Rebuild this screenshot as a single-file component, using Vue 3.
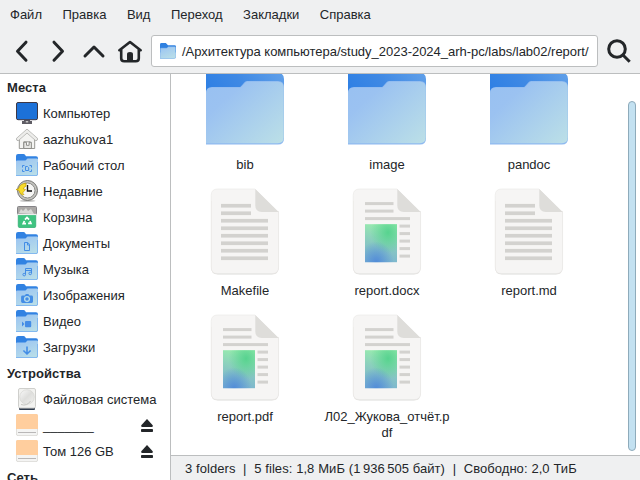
<script setup>
const menus = ['Файл', 'Правка', 'Вид', 'Переход', 'Закладки', 'Справка']
const groups = [
  {
    title: 'Места',
    items: [
      { icon: 'computer', label: 'Компьютер' },
      { icon: 'home', label: 'aazhukova1' },
      { icon: 'desktop', label: 'Рабочий стол' },
      { icon: 'recent', label: 'Недавние' },
      { icon: 'trash', label: 'Корзина' },
      { icon: 'documents', label: 'Документы' },
      { icon: 'music', label: 'Музыка' },
      { icon: 'pictures', label: 'Изображения' },
      { icon: 'video', label: 'Видео' },
      { icon: 'downloads', label: 'Загрузки' },
    ],
  },
  {
    title: 'Устройства',
    items: [
      { icon: 'disk', label: 'Файловая система' },
      { icon: 'volume', label: '_______', eject: true },
      { icon: 'volume', label: 'Том 126 GB', eject: true },
    ],
  },
  { title: 'Сеть', items: [] },
]
const folderIcons = ['desktop', 'documents', 'music', 'pictures', 'video', 'downloads']
const files = [
  { type: 'folder', name: 'bib' },
  { type: 'folder', name: 'image' },
  { type: 'folder', name: 'pandoc' },
  { type: 'text', name: 'Makefile' },
  { type: 'doc', name: 'report.docx' },
  { type: 'text', name: 'report.md' },
  { type: 'doc', name: 'report.pdf' },
  { type: 'doc', name: 'Л02_Жукова_отчёт.pdf' },
]
</script>

<template>
  <div class="window">
    <svg class="defs" width="0" height="0">
      <defs>
        <linearGradient id="back" x1="0" y1="0.6" x2="1" y2="0.3">
          <stop offset="0" stop-color="#2f80e4" />
          <stop offset="0.45" stop-color="#3f89e4" />
          <stop offset="1" stop-color="#5f9fe9" />
        </linearGradient>
        <linearGradient id="front" gradientUnits="userSpaceOnUse" x1="20" y1="26" x2="80" y2="90">
          <stop offset="0" stop-color="#99c1f1" />
          <stop offset="0.2" stop-color="#9bc2f1" />
          <stop offset="1" stop-color="#bbdfe7" />
        </linearGradient>
        <linearGradient id="mini" x1="0.2" y1="0" x2="0.7" y2="1">
          <stop offset="0" stop-color="#9cc5f2" />
          <stop offset="1" stop-color="#b9dee8" />
        </linearGradient>
        <linearGradient id="preview" x1="0.35" y1="1" x2="0.5" y2="0">
          <stop offset="0" stop-color="#7cb4d0" />
          <stop offset="0.45" stop-color="#88c8c2" />
          <stop offset="1" stop-color="#98ebae" />
        </linearGradient>
        <radialGradient id="glow" cx="0.72" cy="0.22" r="0.55">
          <stop offset="0" stop-color="#57d38f" />
          <stop offset="1" stop-color="#57d38f" stop-opacity="0" />
        </radialGradient>
        <radialGradient id="deep" cx="0.35" cy="1" r="0.55">
          <stop offset="0" stop-color="#528cd8" />
          <stop offset="1" stop-color="#528cd8" stop-opacity="0" />
        </radialGradient>
        <linearGradient id="metal" x1="0" y1="0" x2="1" y2="1">
          <stop offset="0" stop-color="#fafafa" />
          <stop offset="0.5" stop-color="#dededc" />
          <stop offset="1" stop-color="#f1f1ef" />
        </linearGradient>
      </defs>
    </svg>

    <nav class="menubar">
      <span v-for="m in menus" :key="m">{{ m }}</span>
    </nav>

    <header class="toolbar">
      <svg class="tool" viewBox="0 0 24 24"><path d="M16 3.200 7.500 12.200l8.500 9" /></svg>
      <svg class="tool" viewBox="0 0 24 24"><path d="M8 3.200 16.500 12.200l-8.500 9" /></svg>
      <svg class="tool" viewBox="0 0 24 24"><path d="M3 17 12 8 21 17" /></svg>
      <svg class="tool" viewBox="0 0 24 24">
        <path class="house" d="M1.400 11.200 12 3 22.600 11.200M3.200 10v9.200q0 3 3 3h11.600q3 0 3-3V10" />
        <path class="solid" d="M9 22.500v-7.300q0-2.200 3-2.200t3 2.200v7.300z" />
      </svg>
      <div class="path">
        <svg class="path-icon" viewBox="0 0 22 22">
          <path fill="#2f80e0" d="M0 2q0-2 2-2h6l3 3h9q2 0 2 2v8H0z" />
          <path fill="url(#mini)" stroke="#66a5e8" stroke-width=".7" d="M.3 21.500V8q0-1 1-1h8l2-2h9q1.300 0 1.300 1.300v13q0 2-2 2z" />
        </svg>
        <span class="path-text">/Архитектура компьютера/study_2023-2024_arh-pc/labs/lab02/report/</span>
      </div>
      <svg class="search" viewBox="0 0 26 26">
        <circle cx="11" cy="11" r="8.300" />
        <path d="m17.200 17.200 6.500 6.500" />
      </svg>
    </header>

    <div class="body">
      <aside class="sidebar">
        <section v-for="g in groups" :key="g.title">
          <h2>{{ g.title }}</h2>
          <div v-for="(it, i) in g.items" :key="i" class="place">
            <svg class="place-icon" viewBox="0 0 22 22">
              <template v-if="folderIcons.includes(it.icon)">
                <path fill="#3182e2" d="M0 2q0-2 2-2h5.500q1 0 1.500.8L10 2.300h10q2 0 2 2V12H0z" />
                <path fill="url(#mini)" d="M0 22V7.500q0-1 1-1h8.500l2-2H21q1 0 1 1V20q0 2-2 2z" />
                <path fill="none" stroke="#6faaf0" stroke-width=".8" d="M0 21.600h20q1.600 0 1.600-1.600V8" />
              </template>
              <g v-if="it.icon === 'desktop'" class="mark">
                <path d="M8.500 11.500H6.500v2M6.500 15.500v2h2M13.500 11.500h2v2M15.500 15.500v2h-2M9.500 12.500h2l1.200 1.200v2.800H9.500z" />
              </g>
              <g v-else-if="it.icon === 'documents'" class="mark">
                <path d="M8.500 10.500h3.300l1.700 1.900v6.100H8.500zM11.500 11v2h2" />
              </g>
              <g v-else-if="it.icon === 'music'" class="mark">
                <path d="M9.500 16.500v-6h6V15M9.500 12.500h6" />
                <circle cx="8.200" cy="16.600" r="1.300" /><circle cx="14.200" cy="15.400" r="1.300" />
              </g>
              <g v-else-if="it.icon === 'pictures'">
                <path fill="#438de6" d="M6.500 11.500h2.300L9.900 10h2.400l1.100 1.500h2.200q1.400 0 1.400 1.400v4.700q0 1.400-1.400 1.400H6.500q-1.400 0-1.400-1.400v-4.700q0-1.400 1.400-1.400z" />
                <circle cx="11" cy="15.100" r="2.400" fill="#438de6" stroke="#b5dbec" stroke-width="1.300" />
              </g>
              <g v-else-if="it.icon === 'video'" fill="#438de6">
                <rect x="9" y="11" width="6.200" height="6.200" rx="1" />
                <path d="M6 11.500 8.500 14 6 16.500z" />
              </g>
              <g v-else-if="it.icon === 'downloads'" class="mark bold">
                <path d="M11 10.500v7.300M7.400 14.500 11 18l3.600-3.500" />
              </g>
              <g v-else-if="it.icon === 'computer'">
                <path fill="#5e5c64" d="M8 18h6v1h2v3H6v-3h2z" />
                <path fill="#deddda" d="M9.800 19.200h2.400v1.200H9.800z" />
                <rect x=".5" y=".5" width="21" height="17.200" rx="1.500" fill="#1c71d8" stroke="#3d3846" />
              </g>
              <g v-else-if="it.icon === 'home'">
                <path fill="#f4f4f2" stroke="#8d8d89" stroke-width=".9" d="M3.300 11v9.500h4.500v-6.700h6.400v6.700h4.500V11L11 4z" />
                <path fill="#e7e7e4" stroke="#858580" stroke-width=".9" d="M7.800 20.500v-6.200h2.700v3h2.600v-3h2.300v6.200z" />
                <path fill="none" stroke="#a2a29e" stroke-width="3.600" stroke-linejoin="round" stroke-linecap="round" d="M2 11 11 3l9 8" />
                <path fill="none" stroke="#ededeb" stroke-width="2.400" stroke-linejoin="round" stroke-linecap="round" d="M2 11 11 3l9 8" />
              </g>
              <g v-else-if="it.icon === 'recent'">
                <ellipse cx="11.500" cy="20.800" rx="8" ry="1.200" fill="#ccc" />
                <circle cx="11.500" cy="10.500" r="10" fill="#c4c4c0" stroke="#73736f" />
                <circle cx="11.500" cy="10.500" r="7.500" fill="#f6f6f4" stroke="#888884" />
                <path fill="none" stroke="#111" stroke-width="1.400" d="M11.500 5v6h4.500" />
                <path fill="#f7dc2c" stroke="#c4a000" stroke-width=".7" d="M0 9.500 2.500 8.800Q4 3.500 10 3.200v3Q7.500 7 7.300 9l2.200.5L6.500 13l1.500 1.500-1.500.3Q3.500 14 3 10.500z" />
              </g>
              <g v-else-if="it.icon === 'trash'">
                <path fill="#3fc380" stroke="#26a269" stroke-width=".6" d="M2.200 8h17.600v12q0 1.700-1.700 1.700H3.900q-1.700 0-1.700-1.700z" />
                <rect x="1.500" y=".5" width="19" height="8" rx="1" fill="#aaa8a6" stroke="#858387" />
                <path fill="#d9d8d6" d="m3 7 2-4 2 2 3-3 2 3 3-2 3 5z" />
                <path fill="none" stroke="#eee" stroke-width="1.200" d="M1.500 8.500h19" />
                <path class="recycle" d="m9 13.600 2-2.200 2 2.200M14 15l.9 2.300h-2.800M10 17.700H7.200L8.400 15" />
              </g>
              <g v-else-if="it.icon === 'disk'">
                <path fill="#2e3a4c" d="M3 18.500h16v2.500q0 1-1 1H4q-1 0-1-1z" />
                <rect x="2.500" y=".5" width="17" height="19.500" rx="1.500" fill="#f2f2f0" stroke="#cfcfcc" />
                <circle cx="11" cy="9" r="7.300" fill="url(#metal)" stroke="#d2d2cf" stroke-width=".6" />
                <path fill="none" stroke="#c5c5c1" stroke-width="1" d="M5 16.500q6 2 9.500-3.500" />
              </g>
              <g v-else-if="it.icon === 'volume'">
                <rect x=".4" y=".4" width="21.200" height="21.200" rx="1.600" fill="#f4f4f3" stroke="#d6d4d1" stroke-width=".8" />
                <path fill="#ffce9e" d="M0 15V1.500Q0 0 1.500 0h19Q22 0 22 1.500V15z" />
                <path stroke="#b9b7b7" stroke-width="1" d="M2 18.500h18" />
              </g>
            </svg>
            <span class="place-label">{{ it.label }}</span>
            <svg v-if="it.eject" class="eject" viewBox="0 0 12 13">
              <path d="M6 0 .3 6.200Q-.2 7.900 1.200 8h9.600q1.400-.1.900-1.800z" />
              <rect y="10" width="12" height="3" rx=".8" />
            </svg>
          </div>
        </section>
      </aside>

      <main class="main">
        <div class="view">
          <div class="grid">
            <div v-for="f in files" :key="f.name" class="file">
              <svg class="file-icon" viewBox="0 0 96 96">
                <template v-if="f.type === 'folder'">
                  <path fill="url(#back)" d="M9 10h30l6 6h36q6 0 6 6v20H9z" />
                  <path fill="#8fbaf0" d="M9 87.400V36q0-6 6-6h27.200q1 0 1.600-.6l3.800-4.200q1.100-1.200 3-1.200H81q6 0 6 6v51.400q0 6-6 6z" />
                  <path fill="url(#front)" d="M9 86.300V36.500q0-5.700 6-5.700h27.500q1.200 0 2-.8l3.600-4q1-1.200 2.700-1.200H81q5.700 0 5.700 6v49.800q0 5.700-6 5.700z" />
                </template>
                <template v-else>
                  <path fill="#deddda" d="M14 18.200v66.800q0 6.800 6.800 6.800H75q6.800 0 6.800-6.800V29z" transform="translate(0 -.4)" />
                  <path fill="#f6f5f4" stroke="#e9e8e6" stroke-width=".6" d="M20.600 6H58l23.600 23.600V84q0 6.600-6.600 6.600H20.600Q14.200 90.600 14.200 84V12.400Q14.200 6 20.600 6z" />
                  <path fill="#deddda" d="M58.300 6v16.500q0 6.500 6.500 6.500H81.700z" />
                  <g v-if="f.type === 'text'" fill="#d3d2cf">
                    <rect x="24" y="20.900" width="30" height="3.700" />
                    <rect x="24" y="28.400" width="30" height="3.700" />
                    <rect v-for="n in 6" :key="n" x="24" :y="28.400 + n * 7.500" width="47" height="3.700" />
                  </g>
                  <g v-else fill="#d3d2cf">
                    <rect x="26" y="19.100" width="28.500" height="3" />
                    <rect x="26" y="26.600" width="28.500" height="3" />
                    <rect x="26" y="34.100" width="45" height="3" />
                    <rect v-for="n in 5" :key="n" x="60.500" :y="34.100 + n * 7.500" width="10.500" height="3" />
                    <rect x="26" y="41.200" width="32" height="38" fill="url(#preview)" />
                    <rect x="26" y="41.200" width="32" height="38" fill="url(#glow)" />
                    <rect x="26" y="41.200" width="32" height="38" fill="url(#deep)" />
                  </g>
                </template>
              </svg>
              <div class="file-name">{{ f.name }}</div>
            </div>
          </div>
          <div class="scrollbar"></div>
        </div>
        <footer class="status">3 folders&nbsp; |&nbsp; 5 files: 1,8 МиБ (1&#8239;936&#8239;505 байт)&nbsp; |&nbsp; Свободно: 2,0 ТиБ</footer>
      </main>
    </div>
  </div>
</template>

<style>
body {
  margin: 0;
  overflow: hidden;
}
</style>

<style scoped>
.window {
  width: 640px;
  height: 480px;
  display: flex;
  flex-direction: column;
  overflow: hidden;
  position: relative;
  background: #eff0f1;
  color: #232629;
  font: 13px/16px "Liberation Sans", Arial, sans-serif;
}
.defs {
  position: absolute;
}
.menubar {
  height: 30px;
  box-sizing: border-box;
  padding: 7px 0 0 10px;
  display: flex;
  gap: 20.500px;
}
.toolbar {
  height: 44px;
  box-sizing: border-box;
  padding: 5px 8px 6px 10px;
  display: flex;
  align-items: center;
  gap: 12px;
  border-bottom: 1px solid #bcbebf;
}
.tool {
  width: 24px;
  height: 24px;
  flex: none;
  fill: none;
  stroke: #232629;
  stroke-width: 3;
  stroke-linecap: round;
  stroke-linejoin: round;
}
.tool .house {
  stroke-width: 2.6;
}
.tool .solid {
  fill: #232629;
  stroke: none;
}
.path {
  width: 447px;
  height: 32px;
  box-sizing: border-box;
  flex: none;
  margin-left: -3px;
  border: 1px solid #bcbebf;
  border-radius: 3px;
  background: #fff;
  display: flex;
  align-items: center;
  gap: 6px;
  padding-left: 8px;
  white-space: nowrap;
}
.path-icon {
  width: 16px;
  height: 16px;
  flex: none;
}
.path-text {
  padding-top: 1px;
  letter-spacing: -0.015px;
}
.search {
  width: 26px;
  height: 26px;
  flex: none;
  margin-left: -4px;
  fill: none;
  stroke: #232629;
  stroke-width: 3;
}
.body {
  flex: 1;
  min-height: 0;
  display: flex;
}
.sidebar {
  width: 171px;
  box-sizing: border-box;
  border-right: 1px solid #bcbebf;
  padding-top: 1px;
  background: #fff;
  overflow: hidden;
}
h2 {
  margin: 0;
  height: 26px;
  padding-left: 7px;
  font-size: 13px;
  line-height: 26px;
  letter-spacing: 0.05px;
}
.place {
  height: 26px;
  display: flex;
  align-items: center;
  padding: 0 17px 0 16px;
}
.place-icon {
  width: 22px;
  height: 22px;
  margin: 0 5px 2px 0;
  flex: none;
}
.place-label {
  flex: 1;
  white-space: nowrap;
}
.mark {
  fill: none;
  stroke: #438de6;
  stroke-width: 1;
}
.mark.bold {
  stroke-width: 1.6;
}
.recycle {
  fill: none;
  stroke: #fff;
  stroke-width: 1.7;
}
.eject {
  width: 12px;
  height: 13px;
  margin-bottom: 1px;
  fill: #232629;
}
.main {
  flex: 1;
  min-width: 0;
  display: flex;
  flex-direction: column;
}
.view {
  flex: 1;
  min-height: 0;
  background: #fff;
  display: flex;
  justify-content: space-between;
  overflow: hidden;
}
.grid {
  display: grid;
  grid-template-columns: repeat(3, 142px);
  grid-auto-rows: 126px;
  margin: -17px 0 0 3px;
}
.file {
  display: flex;
  flex-direction: column;
  align-items: center;
}
.file-icon {
  width: 96px;
  height: 96px;
  flex: none;
}
.file-name {
  width: 128px;
  margin-top: 4px;
  text-align: center;
  word-break: break-all;
}
.scrollbar {
  width: 8px;
  height: 350px;
  box-sizing: border-box;
  margin: 27px 4px 0 0;
  border: 1px solid #8eabbb;
  border-radius: 4px;
  background: #c3e1f1;
}
.status {
  height: 25px;
  box-sizing: border-box;
  border-top: 1px solid #bcbebf;
  padding: 5px 0 0 14px;
  white-space: nowrap;
  letter-spacing: 0.04px;
  word-spacing: 0.2px;
}
</style>
